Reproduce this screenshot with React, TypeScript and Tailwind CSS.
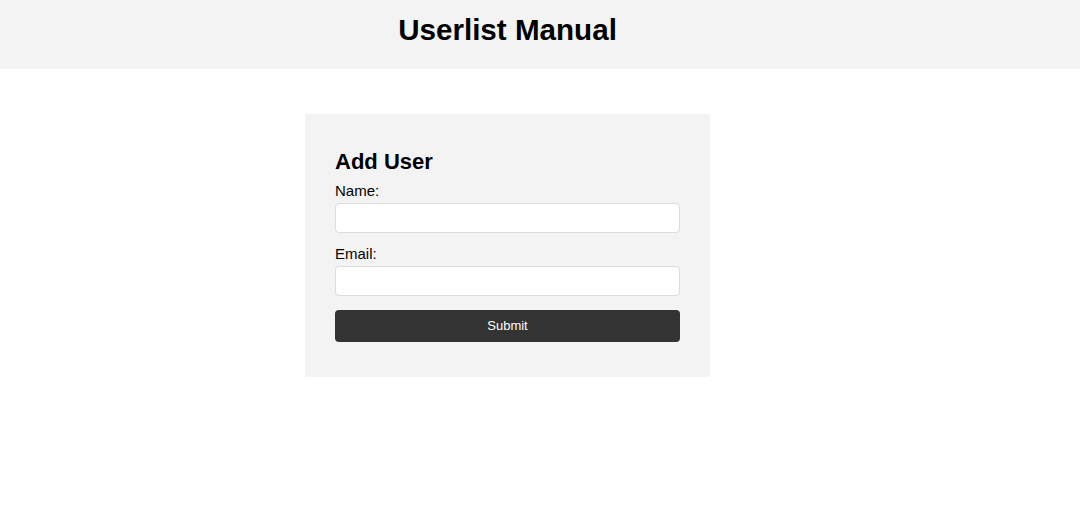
import React, { useState } from 'react';

export default function App() {
  const [name, setName] = useState('');
  const [email, setEmail] = useState('');

  return (
    <div className="min-h-screen bg-white text-black font-['Liberation_Sans',Arial,sans-serif]">
      {/* Header */}
      <header className="w-full h-[69px] bg-[#f3f3f3] pt-[13px]">
        <div className="w-[1015px] flex justify-center">
          <h1 className="text-[29.6px] leading-[34px] font-bold">Userlist Manual</h1>
        </div>
      </header>

      {/* Form card */}
      <div className="w-[1015px] flex justify-center pt-[45px]">
        <form
          className="w-[405px] bg-[#f3f3f3] px-[30px] pt-[35px] pb-[35px] flex flex-col"
          onSubmit={(e) => e.preventDefault()}
        >
          <h2 className="text-[22px] leading-[26px] font-bold mb-[7px]">Add User</h2>

          <label className="text-[15px] leading-[18px]" htmlFor="name">Name:</label>
          <input
            id="name"
            type="text"
            value={name}
            onChange={(e) => setName(e.target.value)}
            className="mt-[3px] h-[30px] w-full bg-white border border-[#dcdcdc] rounded-[4px] px-2 text-[14px] outline-none"
          />

          <label className="mt-3 text-[15px] leading-[18px]" htmlFor="email">Email:</label>
          <input
            id="email"
            type="email"
            value={email}
            onChange={(e) => setEmail(e.target.value)}
            className="mt-[3px] h-[30px] w-full bg-white border border-[#dcdcdc] rounded-[4px] px-2 text-[14px] outline-none"
          />

          <button
            type="submit"
            className="mt-[14px] h-[32px] w-full bg-[#333333] text-white text-[13px] rounded-[4px] flex items-center justify-center"
          >
            Submit
          </button>
        </form>
      </div>
    </div>
  );
}
